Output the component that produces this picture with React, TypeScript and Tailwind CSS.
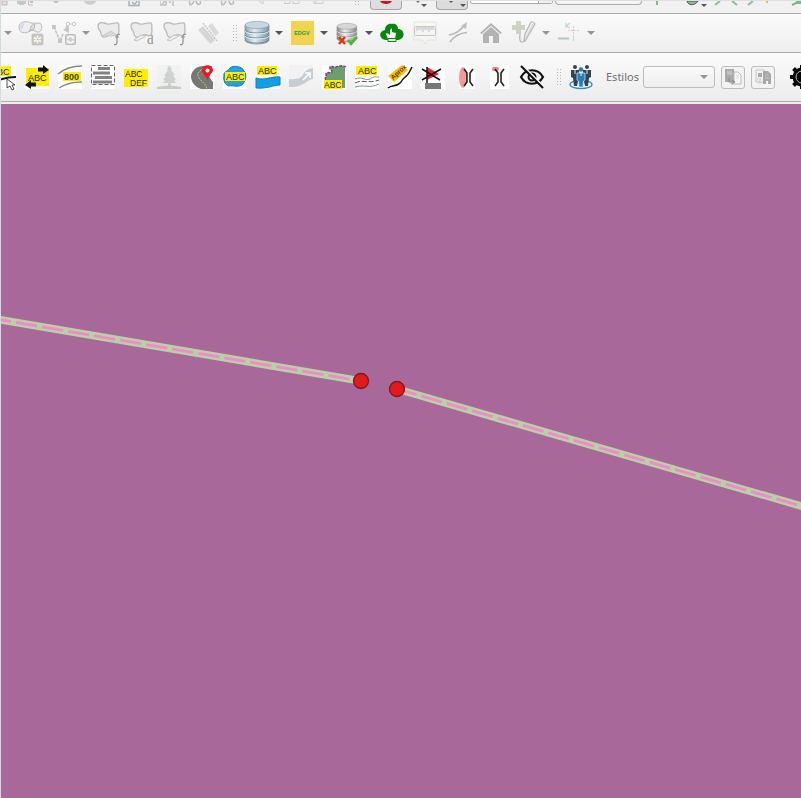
import React from "react";

type Kids = { children?: React.ReactNode };

function Icon({ children, faded = false }: Kids & { faded?: boolean }) {
  return (
    <svg
      viewBox="0 0 24 24"
      aria-hidden="true"
      className={faded ? "size-6 shrink-0 overflow-visible opacity-50" : "size-6 shrink-0 overflow-visible"}
      fontFamily="'Liberation Sans', Arial, sans-serif"
    >
      {children}
    </svg>
  );
}

function Tool({ label, faded, children }: Kids & { label: string; faded?: boolean }) {
  return (
    <button type="button" aria-label={label} title={label} className="flex h-8 w-[33px] shrink-0 items-center pl-1">
      <Icon faded={faded}>{children}</Icon>
    </button>
  );
}

function Arrow({ label, faded = false }: { label: string; faded?: boolean }) {
  return (
    <button type="button" aria-label={label} className="flex h-8 w-3 shrink-0 items-center pl-px">
      <svg viewBox="0 0 8 4" aria-hidden="true" className={faded ? "h-1 w-2 text-[#949494]" : "h-1 w-2 text-[#555555]"}>
        <path d="M0 0h8L4 4z" fill="currentColor" />
      </svg>
    </button>
  );
}

function Grip() {
  return (
    <div className="flex h-8 w-4 shrink-0 items-center pl-2">
      <svg viewBox="0 0 4 17" aria-hidden="true" className="h-[17px] w-1">
        <path d="M.5 0v17M3.5 0v17" stroke="#b4b4b4" strokeDasharray="1 2" />
      </svg>
    </div>
  );
}

function Polygon() {
  return (
    <path
      d="M1 5C1 1 6 1 10 3C14 4 18 1 21 2C23 4 21 7 22 10C22 14 20 16 17 14C13 12 10 17 6 16C3 15 5 12 3 10C1 8 1 7 1 5Z"
      fill="#ececec"
      stroke="#bdbdbd"
      strokeWidth="1.4"
    />
  );
}

function Hook() {
  return <path d="M23 13.500q-3-1-3 2v5q0 4-3 3M18 16h4" fill="none" stroke="#8f8f8f" strokeWidth="1.200" />;
}

function Database({ grey = false }: { grey?: boolean }) {
  const id = grey ? "db-grey" : "db-blue";
  return (
    <>
      <defs>
        <linearGradient id={id}>
          <stop offset="0" stopColor={grey ? "#858585" : "#8ca4af"} />
          <stop offset=".4" stopColor={grey ? "#eeeeee" : "#e1edf2"} />
          <stop offset="1" stopColor={grey ? "#868686" : "#7b96a3"} />
        </linearGradient>
      </defs>
      <path d="M0 4v15c0 2 5 4 12 4s12-2 12-4V4z" fill={`url(#${id})`} stroke={grey ? "#8e8e8e" : "#748b97"} strokeWidth=".7" />
      <ellipse cx="12" cy="4" rx="12" ry="3.6" fill={grey ? "#d7d7d7" : "#c6d7df"} stroke={grey ? "#999999" : "#8299a4"} strokeWidth=".6" />
      <path d="M0 9c1 4 23 4 24 0M0 14c1 4 23 4 24 0M0 19c1 4 23 4 24 0" fill="none" stroke={grey ? "#888888" : "#6c8794"} strokeWidth=".9" />
      <path d="M0 10c1 4 23 4 24 0M0 15c1 4 23 4 24 0" fill="none" stroke="#f4f8f9" strokeWidth=".8" />
    </>
  );
}

/* Lower ends of the tools in the first, mostly scrolled-away toolbar. */
function Stub({ children, className }: Kids & { className: string }) {
  return (
    <div className={`flex h-full shrink-0 items-start justify-center overflow-hidden ${className}`}>
      {children && (
        <svg viewBox="0 0 16 10" aria-hidden="true" className="h-[10px] w-4 shrink-0">
          {children}
        </svg>
      )}
    </div>
  );
}

function TopToolbar() {
  return (
    <div className="flex h-[14px] overflow-hidden border-t border-b border-t-[#dce0e4] border-b-[#ababab] bg-[#f1f1f1]">
      <Stub className="w-2"><path d="M5 0h5v4H5z" fill="#eadcdc" stroke="#c8b5b5" /></Stub>
      <Stub className="w-[32px]">
        <path d="M0 0h9v3H7v1H2V3H0z" fill="#c5c8c1" />
        <path d="M11.500 0v4H16" fill="none" stroke="#cbbcbc" />
        <path d="M13 0h3v2h-3z" fill="#cbbcbc" />
      </Stub>
      <Stub className="w-[30px]"><path d="M5 0h6L9 2H7z" fill="#bdbdbd" /></Stub>
      <Stub className="w-[37px]"><path d="M2 0h12c-1 5-11 5-12 0z" fill="#cfcdc5" /></Stub>
      <Stub className="w-[52px]"><path d="M3 0v4.500h10V0M6 1c2 3 4 2 5-1" fill="none" stroke="#a9adb0" strokeWidth="1.4" /></Stub>
      <Stub className="w-4"><path d="M0 0v4h6V0M2 3l3-3M10 0v2M13 0v5" fill="none" stroke="#c7bfc0" strokeWidth="1.5" /></Stub>
      <Stub className="w-[38px]"><path d="M3 0c-2 5 2 5 4 0M9 0c1 5 6 4 4 0" fill="none" stroke="#bababa" strokeWidth="1.4" /></Stub>
      <Stub className="w-[28px]"><path d="M2 0c-2 5 2 5 4 0M9 0c1 5 6 4 4 0" fill="none" stroke="#bababa" strokeWidth="1.4" /></Stub>
      <Stub className="w-[40px]"><path d="M5 0l4 3V0" fill="none" stroke="#cccccc" /></Stub>
      <Stub className="w-[20px]"><path d="M0 0v2.500h6V0M9 0v2.500h6V0" fill="none" stroke="#cbcbcb" /></Stub>
      <Stub className="w-[30px]"><path d="M5 0v2.500h9V0M5 2l3-2" fill="none" stroke="#cfcccc" /></Stub>
      <Stub className="w-[38px]"><path d="M12.500 0v4M15.500 0v4" stroke="#b4b4b4" strokeDasharray="1 2" /></Stub>
      <button type="button" aria-label="Gravar" className="flex h-[9px] w-8 shrink-0 justify-center rounded-b-sm border border-t-0 border-[#a6a6a6] bg-[#dedede]">
        <svg viewBox="0 0 12 4" aria-hidden="true" className="h-1 w-3"><path d="M0 0h12c-2 4-10 4-12 0z" fill="#c4171c" /></svg>
      </button>
      <Stub className="w-[34px]">
        <path d="M5 0h4L7 2z" fill="#777777" />
        <path d="M10 3h6l-3 3z" fill="#555555" />
      </Stub>
      <button type="button" aria-label="Aderência" className="flex h-[9px] w-8 shrink-0 justify-end rounded-b-sm border border-t-0 border-[#a6a6a6] bg-[#dcdcdc]">
        <svg viewBox="0 0 20 6" aria-hidden="true" className="h-[6px] w-5"><path d="M2 0h4L4 2zM13 3h6l-3 3z" fill="#555555" /></svg>
      </button>
      <div className="ml-[2px] flex h-[3px] w-[83px] shrink-0 justify-end rounded-b-sm border border-t-0 border-[#aaaaaa] bg-white">
        <span className="w-[14px] border-l border-[#aaaaaa] bg-[#f0f0f0]" />
      </div>
      <div className="ml-[2px] h-1 w-[87px] shrink-0 rounded-b-sm border border-t-0 border-[#aaaaaa] bg-[#f5f5f5]" />
      <Stub className="w-[29px]"><path d="M8 0v4" stroke="#83b98a" strokeWidth="2" /></Stub>
      <Stub className="w-[42px]"><path d="M3 0c1 5 8 5 11 0z" fill="#85bd87" stroke="#555555" /></Stub>
      <svg viewBox="0 0 6 6" aria-hidden="true" className="-ml-[12px] h-[6px] w-[6px] shrink-0"><path d="M0 3h6L3 6z" fill="#555555" /></svg>
      <Stub className="w-[20px]"><path d="M6 4l5-4" stroke="#8dbd93" strokeWidth="2" /></Stub>
      <Stub className="w-[14px]"><path d="M6 0l5 4" stroke="#8dbd93" strokeWidth="2" /></Stub>
      <Stub className="w-[18px]"><path d="M6 4l5-4" stroke="#8dbd93" strokeWidth="2" /></Stub>
      <Stub className="w-[16px]"><path d="M7 1h2" stroke="#e2be55" strokeWidth="2" /></Stub>
      <div className="flex-1" />
      <Stub className="w-[16px]"><path d="M7 4l4-2h5M11 0h5" fill="none" stroke="#82b58a" strokeWidth="2" /></Stub>
    </div>
  );
}

function EditingToolbar() {
  return (
    <div className="flex h-[39px] items-center overflow-hidden border-b border-[#ababab] bg-linear-to-b from-[#fbfbfb] to-[#eeeeee] pl-[2px]">
      <Arrow label="Mais opções" faded />
      <Tool label="Mesclar feições" faded>
        <path d="M0 6c0-6 8-6 12-4 4 1 8-1 10 1 2 4 0 9-4 8-5-3-6-1-9 0-5 2-9 0-9-5z" fill="#e8e9ee" stroke="#7f7f7f" />
        <path d="M10 10c2-1 1-7 6-7l-1 5z" fill="#cccccc" stroke="#777777" />
        <path d="M1 7c0-4 3-5 5-5L3 9z" fill="#b9c1dd" />
        <rect x="13" y="13" width="11" height="11" rx="1" fill="#a39e86" stroke="#888475" strokeWidth=".6" />
        <path d="M18.500 14.500v8M15 16.500l7 4M22 16.500l-7 4" stroke="#ffffff" strokeWidth="1.500" />
        <circle cx="18.500" cy="18.500" r="1" fill="#8f8b78" />
      </Tool>
      <Tool label="Editar vértices" faded>
        <path d="M2 6l6 14 3-7M14 7l2-4h5" fill="none" stroke="#8b8f88" strokeWidth="1.500" strokeDasharray="3 1" />
        <path d="M0 4h4v4H0zM6 18h4v4H6zM17 5v7l-6-3z" fill="#979e94" />
        <circle cx="16" cy="3" r="1.700" fill="#ffffff" stroke="#999999" />
        <circle cx="22" cy="3" r="1.700" fill="#ffffff" stroke="#999999" />
        <rect x="13.500" y="13.500" width="10" height="10" rx="1" fill="#b1b1b1" stroke="#888888" />
        <path d="M15.500 17.500c1-3 5-3 6 0v-2M21.500 19.500c-1 3-5 3-6 0v2" fill="none" stroke="#ffffff" strokeWidth="1.700" />
      </Tool>
      <Arrow label="Opções de vértices" faded />
      <Tool label="Remodelar">
        <Polygon />
        <path d="M5 15l9-5 6 4-5 1z" fill="#d9d9d9" stroke="#c0c0c0" strokeWidth=".7" />
        <Hook />
      </Tool>
      <Tool label="Dividir feições">
        <Polygon />
        <path d="M4 19l7-5 5 1-9 5z" fill="#ededed" stroke="#c5c5c5" />
        <text x="17" y="23" fontFamily="'Liberation Serif', serif" fontSize="13" fill="#8a8a8a">d</text>
      </Tool>
      <Tool label="Dividir partes">
        <Polygon />
        <path d="M4 19l7-5 5 1-9 5z" fill="#ededed" stroke="#c5c5c5" />
        <Hook />
      </Tool>
      <Tool label="Aparar linhas" faded>
        <path d="M2 9l5-4 12 14-5 4zM12 5l4-3 7 10-4 3z" fill="#c1c1b9" />
        <path d="M7 2l14 18" stroke="#888888" strokeWidth="1.200" strokeDasharray="2 1" />
        <path d="M4 8l12 14M6 6l12 14" stroke="#a2a29c" strokeWidth=".8" />
      </Tool>
      <Grip />
      <Tool label="Banco de dados"><Database /></Tool>
      <Arrow label="Opções do banco" />
      <Tool label="EDGV">
        <path d="M1 0h23v24H1z" fill="#f1d44d" />
        <text x="12" y="14" textAnchor="middle" fontSize="5.500" fontWeight="bold" fill="#249f46">EDGV</text>
      </Tool>
      <Arrow label="Opções EDGV" />
      <Tool label="Validar banco">
        <g transform="translate(2 2) scale(.82)"><Database grey /></g>
        <path d="M4 16l6 7M10 16l-6 7" stroke="#d93815" strokeWidth="2.500" />
        <path d="M13 19l3 4 6-7" fill="none" stroke="#49b82c" strokeWidth="2.500" />
      </Tool>
      <Arrow label="Opções de validação" />
      <Tool label="Enviar para nuvem">
        <path d="M6 19C-1 19-2 10 5 9C5 4 9 2 12 3C16 2 18 5 18 8C25 8 26 18 18 19z" fill="#0a850e" />
        <path d="M8 18l-2-5 1-1 3 2V9l2-2v4l4 1-1 6z" fill="#f4f4f4" />
        <path d="M8 17.500h8v3H8z" fill="#f4f4f4" stroke="#0a850e" />
      </Tool>
      <Tool label="Medir" faded>
        <path d="M1 1h22v18h-8l-3 4-3-4H1z" fill="#f7f7f2" stroke="#d4d4c9" />
        <rect x="1.500" y="5.500" width="21" height="9" rx="1" fill="#f4f4f4" stroke="#999999" />
        <path d="M4 6v4M6 6v3M8 6v3M10 6v5M12 6v3M14 6v3M16 6v5M18 6v3M20 6v3" stroke="#8a8a8a" />
      </Tool>
      <Tool label="Interseção" faded>
        <path d="M3 14C10 13 14 10 19 4M4 21C9 14 14 12 21 11.500" fill="none" stroke="#808080" strokeWidth="1.600" />
        <path d="M15 5l6-4-1 7z" fill="#888888" />
      </Tool>
      <Tool label="Início" faded>
        <path d="M1 12L12 2l11 10-2 1-9-8-9 8z" fill="#707070" />
        <path d="M4 13l8-7 8 7v9h-6v-7h-4v7H4z" fill="#737373" />
        <path d="M3 13l9-8 9 8" fill="none" stroke="#eeeeee" strokeWidth=".7" />
      </Tool>
      <Tool label="Adicionar feição" faded>
        <path d="M4 0h5v4h4v5H9v4H4V9H0V4h4z" fill="#a5b292" />
        <path d="M8 13c-1 9 1 9 5 7L23 3q-2-3-4-2l-6 12-1 7" fill="#ececec" stroke="#787878" strokeWidth="1.200" />
        <path d="M14 17l7-14" stroke="#aaaaaa" />
      </Tool>
      <Arrow label="Opções de desenho" faded />
      <Tool label="Coordenadas" faded>
        <path d="M9 2v5M13 2l-4 3 4 2" fill="none" stroke="#9eb1b5" strokeWidth="1.200" />
        <path d="M16.500 5v10M11 9.500h12" stroke="#d29fae" strokeDasharray="2 1" />
        <path d="M16.500 15v5" stroke="#a5b7c5" />
        <path d="M1 17.500h11" stroke="#829a94" strokeWidth="2" />
      </Tool>
      <Arrow label="Opções de coordenadas" faded />
    </div>
  );
}

const yellow = "#fdee00";

function LabelToolbar() {
  return (
    <div className="flex h-[49px] items-center overflow-hidden border-b border-[#ababab] bg-linear-to-b from-[#fbfbfb] to-[#ececec]">
      <div className="-ml-[13px] flex shrink-0 items-center">
        <Tool label="Mover rótulo">
          <path d="M0 0h24v24H0z" fill="#ffffff" />
          <path d="M0 1h19v10H0z" fill={yellow} />
          <text x="-1" y="9.500" fontSize="9" fill="#111111">ABC</text>
          <path d="M0 16c9 0 10-4 24-4" stroke="#111111" strokeWidth="2" fill="none" />
          <path d="M15 14v9l3-2 2 4 2-1-2-4h3z" fill="#ffffff" stroke="#222222" strokeWidth=".8" />
        </Tool>
        <Tool label="Girar rótulo">
          <path d="M0 0h24v24H0z" fill="#ffffff" />
          <path d="M1 3h23v18H1z" fill={yellow} />
          <text x="3" y="15.500" fontSize="9" fill="#111111">ABC</text>
          <path d="M13 2.500h5V0l6 5-6 4V6.500h-5zM11 17.500H6V15l-6 5 6 4v-2.500h5z" fill="#111111" />
        </Tool>
        <Tool label="Cota de curva">
          <path d="M0 0h24v24H0z" fill="#ffffff" />
          <path d="M0 9C7 3 14 1 24 1M1 23c6-4 13-6 23-6" fill="none" stroke="#888888" strokeWidth="1.500" />
          <path d="M5 7h18v9H5z" fill={yellow} />
          <text x="6" y="15" fontSize="9" fontWeight="bold" fill="#444400">800</text>
        </Tool>
        <Tool label="Justificar texto">
          <path d="M0 0h24v24H0z" fill="#ffffff" />
          <path d="M.5.5h23v19H.5z" fill="none" stroke="#666666" strokeDasharray="4 2" />
          <path d="M7 3.500h12M2 8h17M4 12.500h17M2 17h19" stroke="#838383" strokeWidth="3" />
        </Tool>
        <Tool label="Quebrar texto">
          <path d="M0 4h24v18H0z" fill={yellow} />
          <text x="1" y="11.500" fontSize="8.500" fill="#222200">ABC</text>
          <text x="6" y="20.500" fontSize="8.500" fill="#222200">DEF</text>
        </Tool>
        <Tool label="Vegetação" faded>
          <path d="M0 0h24v24H0z" fill="#eeeeee" />
          <path d="M12 0l3 5-1 0 4 5-2 0 3 5-2 0 2 3h-5v5h-3v-5H6l2-3H6l3-4H7l4-6h-1z" fill="#a9b3ac" />
          <path d="M0 22q12-3 24 0v2H0z" fill="#9dac9f" />
        </Tool>
        <Tool label="Rodovia">
          <path d="M0 0h24v24H0z" fill="#ffffff" />
          <path d="M13 1h9v6c-4 3-3 5 1 10v7H11C5 22 1 17 1 11 2 5 7 1 13 1z" fill="#777777" />
          <path d="M14 3c-5 3-8 6-5 10s7 6 8 11" fill="none" stroke="#d5c84a" strokeDasharray="2 1" />
          <path d="M18 15C14 9 12 8 12 5.500c0-7 11-7 11 0 0 2-4 4-5 9.500z" fill="#f01725" />
          <circle cx="17.500" cy="5.500" r="2" fill="#ffffff" />
        </Tool>
        <Tool label="Massa d'água">
          <path d="M0 0h24v24H0z" fill="#ffffff" />
          <path d="M1 11C0 6 5 7 7 3c3-3 12-2 14 3 3 4 2 8-1 13-4 4-10 1-14 2-4-1-6-6-5-10z" fill="#25a3de" stroke="#087eb8" />
          <path d="M2 7h20v9H2z" fill={yellow} />
          <text x="3" y="15" fontSize="9" fill="#222200">ABC</text>
        </Tool>
        <Tool label="Rótulo de rio">
          <path d="M0 0h24v24H0z" fill="#ffffff" />
          <path d="M0 13c10 3 14-2 24-1v8c-7 0-12 4-24 3z" fill="#139fe5" stroke="#0883bd" />
          <path d="M1 1h20v9H1z" fill={yellow} />
          <text x="2" y="8.500" fontSize="9" fill="#222200">ABC</text>
        </Tool>
        <Tool label="Sentido do rio">
          <path d="M0 0h24v24H0z" fill="#f2f2f2" />
          <path d="M0 14c10 1 13-2 15-6 2-3 5-4 9-5v11c-7 1-10 9-24 8z" fill="#c6ced5" />
          <path d="M14 15l6-6M16 8h5v5" fill="none" stroke="#ffffff" strokeWidth="1.700" />
        </Tool>
        <Tool label="Rótulo de área">
          <path d="M0 0h24v24H0z" fill="#ffffff" />
          <path d="M8 2c2-2 3 1 6 0 3-2 6-1 9 0v21h-4v-8H4c-2-2 1-4 0-6 1-3 5 0 6-2 0-2-3-3-2-5z" fill="#6e9d70" />
          <path d="M24 2c-3-2-7-1-10 0-3 1-4-2-6 0-1 2 2 3 2 5-1 2-5-1-6 2 1 2-2 4 0 6" fill="none" stroke="#783f80" strokeWidth="1.500" strokeDasharray="3 1" />
          <path d="M2 15h18v9H2z" fill={yellow} />
          <text x="2" y="23" fontSize="8.500" fill="#222200">ABC</text>
        </Tool>
        <Tool label="Rótulo de curso d'água">
          <path d="M0 0h24v24H0z" fill="#ffffff" />
          <path d="M1 1h21v9H1z" fill={yellow} />
          <text x="3" y="8.500" fontSize="9" fill="#222200">ABC</text>
          <path d="M0 14c8-3 9 2 15 0 4-3 5-2 9-2M0 22c11-3 13 2 24-3" fill="none" stroke="#789299" />
          <path d="M0 18c8-4 14 1 24-3" fill="none" stroke="#555555" strokeDasharray="5 2" />
        </Tool>
        <Tool label="Texto aproximado">
          <path d="M0 0h24v24H0z" fill="#ffffff" />
          <path d="M0 11L14 0l6 5L6 17z" fill="#fcc000" />
          <text transform="translate(5 15) rotate(-42)" fontSize="6.500" fontWeight="bold" fill="#553d00">Aprox</text>
          <path d="M0 23c5-4 10 0 15-9 4-3 5-4 9-12" fill="none" stroke="#111111" strokeWidth="1.500" />
        </Tool>
        <Tool label="Remover sinalização">
          <path d="M0 0h24v24H0z" fill="#ffffff" />
          <path d="M6 2l12 7-12 6z" fill="#f11d2b" />
          <path d="M4 18h16v6H4z" fill="#777777" />
          <path d="M6 2v16M1 4l18 11M1 15L20 4" fill="none" stroke="#111111" strokeWidth="1.500" />
        </Tool>
        <Tool label="Ajustar ponte">
          <path d="M5 0h16v24H5z" fill="#ffffff" />
          <ellipse cx="9" cy="12.500" rx="4" ry="10.500" fill="#f4989b" />
          <path d="M10 4l3 4v9l-3 4M19 4l-3 4v9l3 4" fill="none" stroke="#222222" strokeWidth="1.600" />
        </Tool>
        <Tool label="Ajustar extremidade">
          <path d="M3 0h19v24H3z" fill="#ffffff" />
          <ellipse cx="8.500" cy="4" rx="3.500" ry="2.200" fill="#ee8589" />
          <path d="M8 4l3 4v9l-3 4M17 4l-3 4v9l3 4" fill="none" stroke="#222222" strokeWidth="1.600" />
        </Tool>
        <Tool label="Ocultar rótulo">
          <path d="M1 12c5-9 17-9 22 0-5 9-17 9-22 0z" fill="none" stroke="#111111" strokeWidth="2.200" />
          <circle cx="12" cy="12" r="3.500" fill="none" stroke="#111111" strokeWidth="2" />
          <path d="M2 0l22 22" stroke="#f6f6f6" strokeWidth="2" />
          <path d="M1 1l22 22" stroke="#111111" strokeWidth="2.200" />
        </Tool>
      </div>
      <Grip />
      <Tool label="Usuários">
        <ellipse cx="12" cy="19.500" rx="11" ry="4" fill="#edf8ff" stroke="#3b88c5" strokeWidth="1.300" />
        <circle cx="6" cy="2" r="2" fill="#304455" />
        <circle cx="18" cy="2" r="2" fill="#304455" />
        <path d="M2 5h8v7l-2 9H5L4 13 2 12zM14 5h8v7l-2 1-1 8h-3l-2-9z" fill="#304455" />
        <circle cx="12" cy="4.500" r="2.300" fill="#287dc0" />
        <path d="M8 8h8v7l-1.500 1-.5 6h-4l-.5-6L8 15z" fill="#287dc0" stroke="#e1edf6" strokeWidth=".7" />
        <path d="M6 5v4M18 5v4M12 8v3" stroke="#e1edf6" />
      </Tool>
      <label htmlFor="styles" className="ml-2 w-[37px] shrink-0 font-['Noto_Sans',sans-serif] text-[11px] leading-4 text-[#6d7078]">Estilos</label>
      <div className="relative shrink-0">
        <select id="styles" disabled className="block h-[22px] w-[72px] appearance-none rounded-[3px] border border-[#bcbcbc] bg-linear-to-b from-[#fafafa] to-[#eeeeee] px-2 text-xs">
          <option value="" />
        </select>
        <svg viewBox="0 0 8 4" aria-hidden="true" className="pointer-events-none absolute top-[9px] right-[7px] h-1 w-2">
          <path d="M0 0h8L4 4z" fill="#949494" />
        </svg>
      </div>
      <button type="button" aria-label="Carregar estilo" className="ml-[6px] flex h-[23px] w-6 shrink-0 items-center justify-center rounded-[3px] border border-[#bdbdbd] bg-[#f3f3f3]">
        <svg viewBox="0 0 18 18" aria-hidden="true" className="size-[18px] shrink-0">
          <path d="M1 1h9v13H1z" fill="#a9a9a9" />
          <path d="M10 4h4l3 3v9H7v-2h3z" fill="#f5f5f5" stroke="#bcbcbc" />
          <path d="M3 4h5M3 6h5M12 8h3M12 10h3" stroke="#d9d9d9" />
          <path d="M5 10v4h5M8 12l3 2-3 2" fill="none" stroke="#888888" />
        </svg>
      </button>
      <button type="button" aria-label="Salvar estilo" className="ml-[6px] flex h-[23px] w-6 shrink-0 items-center justify-center rounded-[3px] border border-[#bdbdbd] bg-[#f3f3f3]">
        <svg viewBox="0 0 18 18" aria-hidden="true" className="size-[18px] shrink-0">
          <path d="M2 2h8v12H2z" fill="#f3f3f3" stroke="#c4c4c4" />
          <path d="M4 5h4v4H4zM9 3h5l3 3v10h-3v-3h-2v3H9z" fill="#a8a8a8" />
          <path d="M3 11h4l-3 4h4M11 7h4M11 10h4" fill="none" stroke="#c9c9c9" />
        </svg>
      </button>
      <div className="ml-[11px] flex shrink-0">
        <Tool label="Configurações">
          <g fill="#080808">
            <circle cx="12" cy="12" r="9.500" />
            <path id="tooth" d="M10 4V0h4v24h-4z" />
            <use href="#tooth" transform="rotate(45 12 12)" />
            <use href="#tooth" transform="rotate(90 12 12)" />
            <use href="#tooth" transform="rotate(135 12 12)" />
          </g>
          <circle cx="12" cy="12" r="6" fill="none" stroke="#dddddd" strokeWidth=".8" />
        </Tool>
      </div>
    </div>
  );
}

/* Each road is a pale casing with a dashed centre line; its open end is a node. */
const roads = [
  { casing: "M-11 214L360 277", phase: 0, cx: 360, cy: 277 },
  { casing: "M396 285L1204 519", phase: 1, cx: 396, cy: 285 },
];

function MapCanvas() {
  return (
    <svg role="img" aria-label="Mapa com duas linhas e suas extremidades" className="block min-h-0 w-full flex-1 bg-[#a8699a]">
      {roads.map((road) => (
        <g key={road.cx}>
          <path d={road.casing} stroke="#b9d2a5" strokeWidth="7.500" />
          <path d={road.casing} stroke="#f18acb" strokeWidth="2.800" strokeDasharray="21.400 5" strokeDashoffset={road.phase} />
          <circle cx={road.cx} cy={road.cy} r="7.500" fill="#e31a1c" stroke="#80171c" strokeWidth="1.300" />
        </g>
      ))}
    </svg>
  );
}

export default function App() {
  return (
    <div className="flex h-screen flex-col overflow-hidden border-l border-[#d3dbe2] bg-[#f0f0f0]">
      <header className="shrink-0 border-b-2 border-[#eeeeee]">
        <TopToolbar />
        <EditingToolbar />
        <LabelToolbar />
      </header>
      <MapCanvas />
    </div>
  );
}
